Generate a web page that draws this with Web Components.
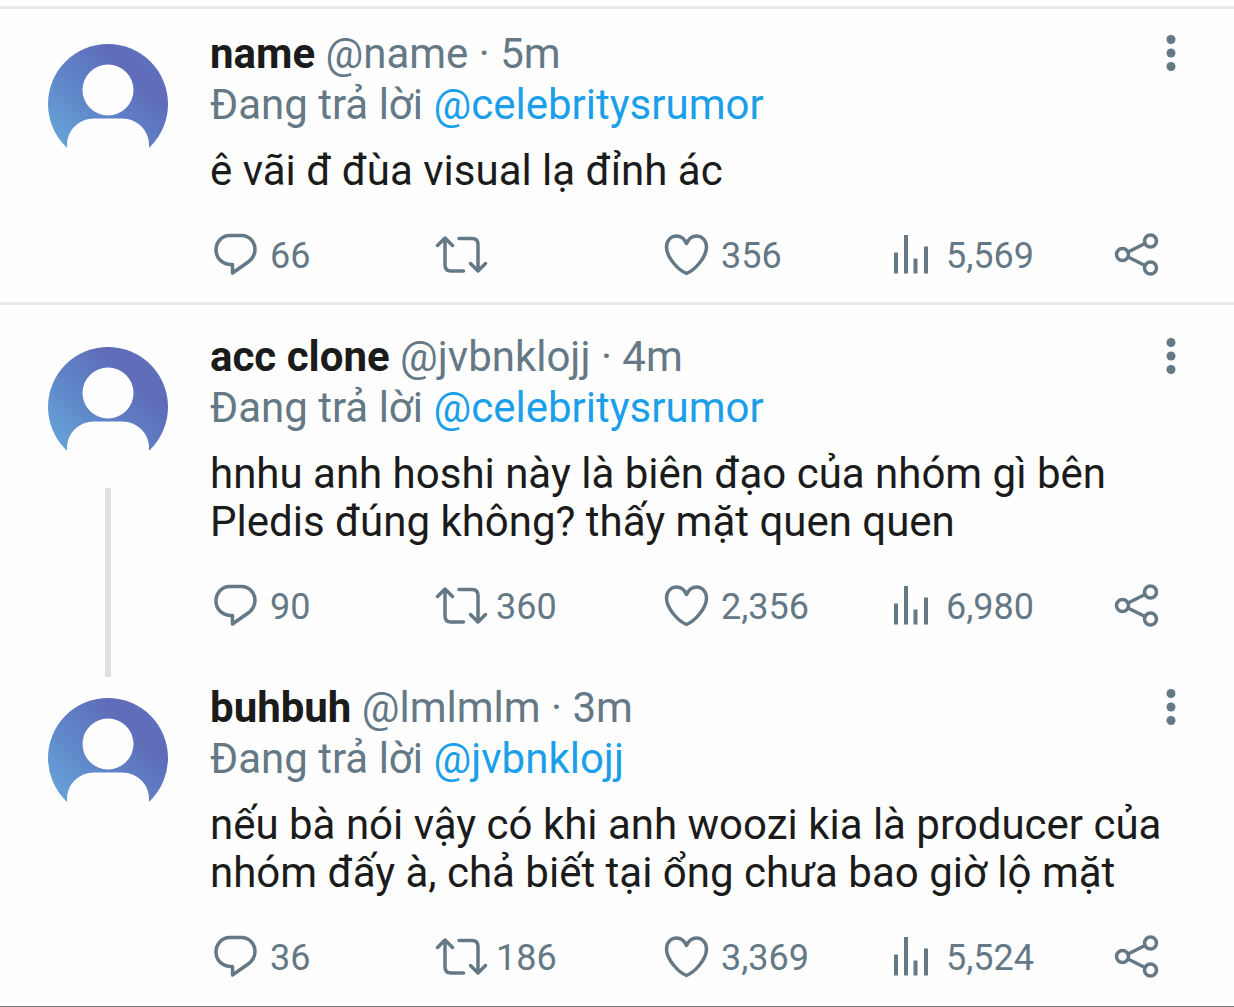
<!DOCTYPE html>
<html lang="vi">
<head>
<meta charset="utf-8">
<meta name="viewport" content="width=device-width, initial-scale=1">
<title>Replies</title>
<style>
  body {
    margin: 0;
    background: #fefefe;
    font-family: Roboto, "Liberation Sans", sans-serif;
    --ink: #1b1b1b;
    --muted: #647885;
    --link: #1c9fea;
    --rule: #e8e8e8;
    --thread: #e0e0e0;
    --end: #777;
    color: var(--ink);
  }
</style>
</head>
<body>
<tweet-feed>
  <tweet-thread>
    <tweet-card name="name" handle="@name" age="5m" reply-to="@celebritysrumor"
      replies="66" likes="356" views="5,569">ê vãi đ đùa visual lạ đỉnh ác</tweet-card>
  </tweet-thread>
  <tweet-thread>
    <tweet-card linked name="acc clone" handle="@jvbnklojj" age="4m" reply-to="@celebritysrumor"
      replies="90" retweets="360" likes="2,356" views="6,980">hnhu anh hoshi này là biên đạo của nhóm gì bên Pledis đúng không? thấy mặt quen quen</tweet-card>
    <tweet-card name="buhbuh" handle="@lmlmlm" age="3m" reply-to="@jvbnklojj"
      replies="36" retweets="186" likes="3,369" views="5,524">nếu bà nói vậy có khi anh woozi kia là producer của nhóm đấy à, chả biết tại ổng chưa bao giờ lộ mặt</tweet-card>
  </tweet-thread>
</tweet-feed>

<script>
  const define = (tag, render) => customElements.define(tag, class extends HTMLElement {
    connectedCallback() {
      if (this.shadowRoot) return;
      this.attachShadow({ mode: "open" }).innerHTML = render(this);
    }
  });

  const icons = {
    reply: [52, '<path d="M19.500 2.500H31.500C39.500 2.500 45 9 45 16.500C45 22 42.500 26 37.500 29.500L22.500 40V31.500H20C12 31 6 25 6 17C6 9 12 2.500 19.500 2.500Z"/>'],
    retweet: [56, '<path d="M5.500 12.500L13 5L20.500 12.500M13 5.500V32Q13 38 19 38H31.500M27 5.500H40Q46 5.500 46 11.500V38M38.500 30.500L46 38L53.500 30.500"/>'],
    like: [52, '<path d="M25.500 40.500C18 37.500 5.500 25 5.500 14C5.500 7 10.500 3 15.500 3C20 3 23.500 6 25.500 10.500C27.500 6 31 3 35.500 3C40.500 3 45.500 7 45.500 14C45.500 25 33 37.500 25.500 40.500Z"/>'],
    views: [49, '<path stroke="none" fill="currentColor" d="M5 19.500h4v21h-4zM15 2h4v38.500h-4zM24.500 25.500h4v15h-4zM35 13.500h4v27h-4z"/>'],
    share: [52, '<circle cx="11.500" cy="21.500" r="6"/><circle cx="39.500" cy="8" r="6"/><circle cx="39.500" cy="35" r="6"/><path d="M17 19L34 10.500M17 24L34 32.500"/>']
  };

  define("tweet-action", el => {
    const [w, art] = icons[el.getAttribute("icon")];
    return `
    <style>
      :host { display: block; }
      button { display: flex; align-items: center; gap: 8px; height: 44px; padding: 0; border: 0;
        background: none; color: var(--muted); font: 36px/46px Roboto, "Liberation Sans", sans-serif; cursor: pointer; }
      span { padding-top: 2px; line-height: 44px; }
      svg { flex: none; height: 44px; fill: none; stroke: currentColor; stroke-width: 3.500;
        stroke-linecap: round; stroke-linejoin: round; }
    </style>
    <button type="button" aria-label="${el.getAttribute("label")}">
      <svg width="${w}" viewBox="0 0 ${w} 44" aria-hidden="true">${art}</svg><span><slot></slot></span>
    </button>`;
  });

  define("user-avatar", () => `
    <style>
      :host { display: block; width: 120px; height: 120px; }
      svg { display: block; width: 100%; height: 100%; }
    </style>
    <svg viewBox="0 0 120 120" aria-hidden="true">
      <defs>
        <linearGradient id="g" x1="0" y1="0.850" x2="0.750" y2="0.100">
          <stop offset="0" stop-color="#68a8da"/>
          <stop offset="0.500" stop-color="#5f83c8"/>
          <stop offset="0.900" stop-color="#5f6bb8"/>
          <stop offset="1" stop-color="#606fbb"/>
        </linearGradient>
      </defs>
      <circle cx="60" cy="60" r="60" fill="url(#g)"/>
      <circle cx="60" cy="46" r="25.500" fill="#fefefe"/>
      <path fill="#fefefe" d="M19 120V101C19 86 31 74.500 46 74.500H74C89 74.500 101 86 101 101V120Z"/>
    </svg>`);

  define("tweet-card", el => {
    const a = n => el.getAttribute(n) || "";
    return `
    <style>
      :host { display: block; }
      article { display: flex; gap: 42px; padding: var(--card-top, 26px) 48px 0; }
      .side { flex: none; display: flex; flex-direction: column; align-items: center; gap: 21px; padding-top: 16px; }
      .line { flex: 1; width: 6px; margin-bottom: -21px; background: var(--thread); }
      .main { flex: 1; min-width: 0; padding-bottom: 25px; }
      :host([linked]) .main { padding-bottom: 28px; }
      header { display: flex; align-items: flex-start; justify-content: space-between; }
      .who, .to { font-size: 42px; line-height: 51px; color: var(--muted); }
      b { font-weight: 700; color: var(--ink); }
      a { color: inherit; text-decoration: none; }
      .to a { color: var(--link); }
      .text { margin: 17px 0 38px; font-size: 42px; line-height: 48px; }
      p { margin: 0; }
      .more { width: 30px; height: 51px; padding: 0; border: 0; background: none; color: var(--muted); cursor: pointer; }
      .more svg { display: block; fill: currentColor; }
      .actions { display: grid; grid-template-columns: 222fr 229fr 228fr 222fr 75fr; }
    </style>
    <article>
      <div class="side"><user-avatar></user-avatar>${el.hasAttribute("linked") ? '<div class="line"></div>' : ""}</div>
      <div class="main">
        <header>
          <div class="who"><b>${a("name")}</b> <a href="#user">${a("handle")}</a> · ${a("age")}</div>
          <button class="more" type="button" aria-label="More">
            <svg width="30" height="51" viewBox="0 0 30 51"><circle cx="15" cy="11.500" r="4.500"/><circle cx="15" cy="25" r="4.500"/><circle cx="15" cy="38.500" r="4.500"/></svg>
          </button>
        </header>
        <p class="to">Đang trả lời <a href="#user">${a("reply-to")}</a></p>
        <p class="text"><slot></slot></p>
        <div class="actions">
          <tweet-action icon="reply" label="Reply">${a("replies")}</tweet-action>
          <tweet-action icon="retweet" label="Retweet">${a("retweets")}</tweet-action>
          <tweet-action icon="like" label="Like">${a("likes")}</tweet-action>
          <tweet-action icon="views" label="Views">${a("views")}</tweet-action>
          <tweet-action icon="share" label="Share"></tweet-action>
        </div>
      </div>
    </article>`;
  });

  define("tweet-thread", () => `
    <style>
      :host { display: block; border-bottom: 3px solid var(--rule); }
      :host(:first-child) { --card-top: 19px; border-top: 3px solid var(--rule); }
      :host(:last-child) { border-bottom: 1px solid var(--end); padding-bottom: 2px; }
    </style>
    <slot></slot>`);

  define("tweet-feed", () => `
    <style>:host { display: block; padding-top: 6px; }</style>
    <main><slot></slot></main>`);
</script>
</body>
</html>
